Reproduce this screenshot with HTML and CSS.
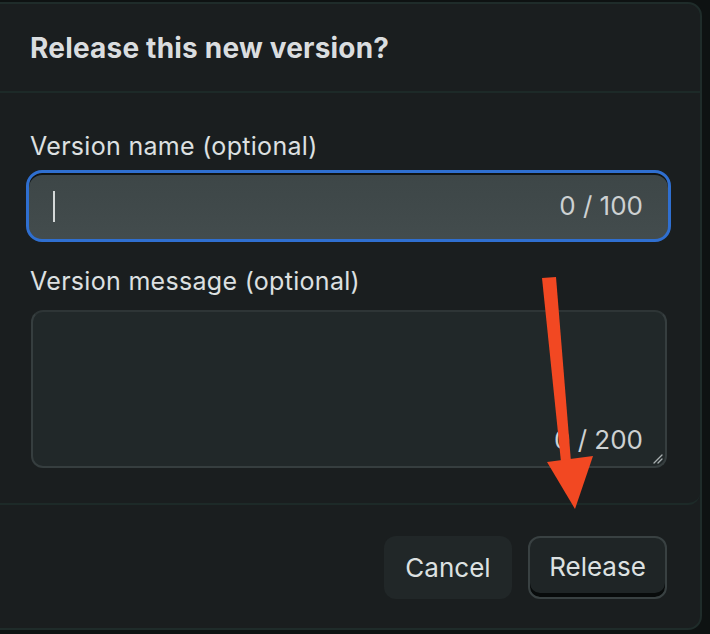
FILE: index.html
```html
<!DOCTYPE html>
<html lang="en">
<head>
<meta charset="utf-8">
<title>Release this new version?</title>
<link rel="stylesheet" href="styles.css">
</head>
<body>
<div class="dialog">
  <div class="dialog-header">
    <h1 class="title">Release this new version?</h1>
  </div>
  <div class="dialog-body">
    <label class="field-label">Version name (optional)</label>
    <div class="input focused">
      <span class="caret"></span>
      <span class="counter">0 / 100</span>
    </div>
    <label class="field-label second">Version message (optional)</label>
    <div class="textarea">
      <span class="counter">0 / 200</span>
      <svg class="grip" width="10" height="10" viewBox="0 0 10 10"><path d="M1 9 L9 1 M5 9 L9 5" stroke="#a9b0b1" stroke-width="1.3" stroke-linecap="round"/></svg>
    </div>
  </div>
  <div class="dialog-footer">
    <button class="btn btn-cancel">Cancel</button>
    <button class="btn btn-release">Release</button>
  </div>
</div>
<svg class="annotation" width="710" height="634" viewBox="0 0 710 634">
  <polygon points="542,278 556,277 571,462 561,462" fill="#f24822"/>
  <polygon points="547,462 593,456 575,509" fill="#f24822"/>
</svg>
</body>
</html>
```

FILE: styles.css
```css
html, body {
  margin: 0;
  padding: 0;
}
body {
  width: 710px;
  height: 634px;
  background: #0e1212;
  overflow: hidden;
  position: relative;
  font-family: Inter, "Noto Sans", "Liberation Sans", sans-serif;
  color: #dde0e1;
}
.dialog {
  margin-top: 2px;
  margin-left: -14px;
  width: 716px;
  height: 628px;
  box-sizing: border-box;
  border: 2px solid #1f2c2a;
  border-radius: 14px;
  background: #1a1e1f;
  display: flex;
  flex-direction: column;
}
.dialog-header {
  height: 89px;
  box-sizing: border-box;
  padding: 29px 0 0 42px;
  border-bottom: 2px solid #1d2a28;
}
.title {
  margin: 0;
  font-size: 28px;
  line-height: 30px;
  font-weight: 700;
  color: #dadddf;
  letter-spacing: 0.2px;
}
.dialog-body {
  box-sizing: border-box;
  height: 412px;
  padding: 39px 33px 0 42px;
  border-bottom: 2px solid #1d2a28;
  border-radius: 0 0 12px 12px;
  display: flex;
  flex-direction: column;
  align-items: flex-start;
}
.field-label {
  display: block;
  font-size: 25px;
  line-height: 28px;
  letter-spacing: 0.3px;
  color: #dde0e1;
}
.input {
  margin-top: 10px;
  margin-left: -4px;
  width: 645px;
  height: 72px;
  box-sizing: border-box;
  border: 3px solid #2f6fd0;
  border-radius: 16px;
  background: linear-gradient(#3d4647, #434c4d);
  box-shadow: inset 0 2px 0 #101414;
  display: flex;
  align-items: center;
  justify-content: space-between;
  padding: 0 25px 0 24px;
}
.caret {
  width: 2px;
  height: 31px;
  background: #d4d8d8;
}
.counter {
  font-size: 26px;
  line-height: 28px;
  color: #cdd1d2;
}
.field-label.second {
  margin-top: 25px;
}
.textarea {
  position: relative;
  margin-top: 15px;
  margin-left: 1px;
  width: 636px;
  height: 158px;
  box-sizing: border-box;
  border: 2px solid #363e3f;
  border-top-color: #2e3536;
  border-radius: 12px;
  background: #212829;
  display: flex;
  align-items: flex-end;
  justify-content: flex-end;
  padding: 0 22px 12px 0;
}
.grip {
  position: absolute;
  right: 2px;
  bottom: 2px;
}
.dialog-footer {
  flex: 1;
  display: flex;
  justify-content: flex-end;
  align-items: flex-start;
  gap: 16px;
  padding: 31px 33px 0 0;
}
.btn {
  font-family: Inter, "Noto Sans", "Liberation Sans", sans-serif;
  font-size: 26px;
  color: #dde1e1;
  height: 63px;
  box-sizing: border-box;
  border-radius: 12px;
  cursor: pointer;
  padding: 0;
}
.btn-cancel {
  width: 128px;
  border: none;
  background: #212728;
}
.btn-release {
  width: 139px;
  border: 2px solid #394142;
  background: #1f2526;
  box-shadow: inset 0 -4px 0 #080b0b;
  padding-bottom: 3px;
}
.annotation {
  position: absolute;
  left: 0;
  top: 0;
  pointer-events: none;
}
```
